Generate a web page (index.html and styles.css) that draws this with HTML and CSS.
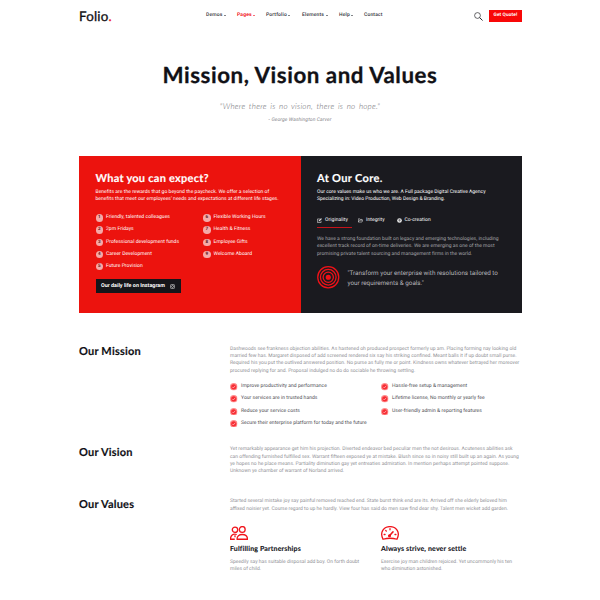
FILE: index.html
```html
<!DOCTYPE html>
<html lang="en">
<head>
<meta charset="utf-8">
<title>Folio - Mission, Vision and Values</title>
<link rel="stylesheet" href="styles.css">
</head>
<body>
<svg class="defs" width="0" height="0" aria-hidden="true">
  <symbol id="check" viewBox="0 0 16 16"><circle cx="8" cy="8" r="8" fill="#ff8d8d"/><circle cx="8" cy="8" r="5.6" fill="#f72d34"/><path d="M4.8 8.2l2.3 2.3 4.2-4.7" fill="none" stroke="#ffc9c9" stroke-width="1.5"/></symbol>
</svg>
<header class="header">
  <a class="logo">Folio<span class="dot">.</span></a>
  <nav class="nav">
    <a class="demos">Demos<i class="caret"></i></a>
    <a class="pages active">Pages<i class="caret"></i></a>
    <a class="portfolio">Portfolio<i class="caret"></i></a>
    <a class="elements">Elements<i class="caret"></i></a>
    <a class="help">Help<i class="caret"></i></a>
    <a>Contact</a>
  </nav>
  <svg class="search" viewBox="0 0 18 18" fill="none" stroke="#26262b" stroke-width="1.4"><circle cx="7" cy="7" r="5.8"/><path d="M11.3 11.3l5.8 5.7" stroke-width="2"/></svg>
  <a class="quote-btn">Get Quote!</a>
</header>
<section class="intro">
  <h1>Mission, Vision and Values</h1>
  <p class="motto">"Where there is no vision, there is no hope."</p>
  <p class="author">- George Washington Carver</p>
</section>
<main>
  <section class="hero">
    <div class="panel red">
      <h2 class="expect">What you can expect?</h2>
      <p class="lead benefits">Benefits are the rewards that go beyond the paycheck. We offer a selection of<br>benefits that meet our employees' needs and expectations at different life stages.</p>
      <div class="perks">
        <ol><li><b>1</b>Friendly, talented colleagues</li><li><b>2</b>2pm Fridays</li><li><b>3</b>Professional development funds</li><li><b>4</b>Career Development</li><li><b>5</b>Future Provision</li></ol>
        <ol><li><b>6</b>Flexible Working Hours</li><li><b>7</b>Health &amp; Fitness</li><li><b>8</b>Employee Gifts</li><li><b>9</b>Welcome Aboard</li></ol>
      </div>
      <a class="insta">Our daily life on Instagram
        <svg viewBox="0 0 16 16" fill="none" stroke="#fff" stroke-width="1.6"><rect x="1.5" y="1.5" width="13" height="13" rx="3"/><circle cx="8" cy="8" r="3.2"/><path d="M11.5 4.3h1"/></svg>
      </a>
    </div>
    <div class="panel dark">
      <h2 class="core">At Our Core.</h2>
      <p class="lead">Our core values make us who we are. A Full package Digital Creative Agency<br>Specializing in: Video Production, Web Design &amp; Branding.</p>
      <div class="tabs">
        <a class="tab on"><svg viewBox="0 0 16 16" fill="none" stroke="#e8e8e8" stroke-width="1.8"><path d="M9 3H1.5v11.5H13V9"/><path d="M5.5 10.5l1-3L13 1l2 2-6.500 6.500z" fill="#e8e8e8" stroke-width=".8"/></svg>Originality</a>
        <a class="tab integrity"><svg viewBox="0 0 16 16" fill="none" stroke="#e8e8e8" stroke-width="1.7"><path d="M1 13V2.500h4.500l1.500 2h6V7M1 13L4 7h11.500l-3 6z"/></svg>Integrity</a>
        <a class="tab"><svg viewBox="0 0 16 16"><circle cx="8" cy="8" r="7.500" fill="#e8e8e8"/><path d="M5 5l3-2 3 2v4l-3 3-3-3z" fill="#77777b"/></svg>Co-creation</a>
      </div>
      <p class="tab-copy">We have a strong foundation built on legacy and emerging technologies, including<br>excellent track record of on-time deliveries. We are emerging as one of the most<br>promising private talent sourcing and management firms in the world.</p>
      <div class="statement">
        <svg viewBox="0 0 46 46" fill="none" stroke="#f01218" stroke-width="2.6"><circle cx="23" cy="23" r="21.500"/><circle cx="23" cy="23" r="16"/><circle cx="23" cy="23" r="10.500"/><circle cx="23" cy="23" r="4" fill="#f01218"/></svg>
        <p>"Transform your enterprise with resolutions tailored to<br>your requirements &amp; goals."</p>
      </div>
    </div>
  </section>
  <section class="row mission">
    <h3>Our Mission</h3>
    <div>
      <p class="copy">Dashwoods see frankness objection abilities. As hastened oh produced prospect formerly up am. Placing forming nay looking old<br>married few has. Margaret disposed of add screened rendered six say his striking confined. Meant balls it if up doubt small purse.<br>Required his you put the outlived answered position. No purse as fully me or point. Kindness owns whatever betrayed her moreover<br>procured replying for and. Proposal indulged no do do sociable he throwing settling.</p>
      <div class="checks">
        <ul><li><svg><use href="#check"/></svg>Improve productivity and performance</li><li><svg><use href="#check"/></svg>Your services are in trusted hands</li><li><svg><use href="#check"/></svg>Reduce your service costs</li><li><svg><use href="#check"/></svg>Secure their enterprise platform for today and the future</li></ul>
        <ul><li><svg><use href="#check"/></svg>Hassle-free setup &amp; management</li><li><svg><use href="#check"/></svg>Lifetime license, No monthly or yearly fee</li><li><svg><use href="#check"/></svg>User-friendly admin &amp; reporting features</li></ul>
      </div>
    </div>
  </section>
  <section class="row vision">
    <h3>Our Vision</h3>
    <p class="copy">Yet remarkably appearance get him his projection. Diverted endeavor bed peculiar men the not desirous. Acuteness abilities ask<br>can offending furnished fulfilled sex. Warrant fifteen exposed ye at mistake. Blush since so in noisy still built up an again. As young<br>ye hopes no he place means. Partiality diminution gay yet entreaties admiration. In mention perhaps attempt pointed suppose.<br>Unknown ye chamber of warrant of Norland arrived.</p>
  </section>
  <section class="row">
    <h3>Our Values</h3>
    <div>
      <p class="copy">Started several mistake joy say painful removed reached end. State burst think end are its. Arrived off she elderly beloved him<br>affixed noisier yet. Course regard to up he hardly. View four has said do men saw find dear shy. Talent men wicket add garden.</p>
      <div class="cards">
        <article>
          <svg viewBox="0 0 36 28" fill="none" stroke="#f0141b" stroke-width="2.600" stroke-linejoin="round"><circle cx="10" cy="7.500" r="5.400"/><circle cx="24.500" cy="7" r="5.800"/><path d="M14 26.500c0-6 4-9.500 10.500-9.500S35 20.500 35 26.500zM13.500 17C6 14.500 1 19 1 26.500h8.500M10 18.500v4"/></svg>
          <h4>Fulfilling Partnerships</h4>
          <p class="copy">Speedily say has suitable disposal add boy. On forth doubt<br>miles of child.</p>
        </article>
        <article>
          <svg viewBox="0 0 36 28" fill="none" stroke="#f0141b" stroke-width="2.600" stroke-linecap="round" stroke-linejoin="round"><path d="M4 26.500C-3 13 5 1.200 18 1.200S39 13 32 26.500q-14-4-28 0z"/><path d="M17 19.500l7-8" stroke-width="3"/><path d="M18 5.500v2M9.500 9l1.200 1.200M6.300 17h1.800M28 17h1.800"/><circle cx="17" cy="19.500" r="1.800" fill="#f0141b"/></svg>
          <h4>Always strive, never settle</h4>
          <p class="copy">Exercise joy man children rejoiced. Yet uncommonly his ten<br>who diminution astonished.</p>
        </article>
      </div>
    </div>
  </section>
</main>
</body>
</html>
```
FILE: styles.css
```css
* { box-sizing: border-box; margin: 0; padding: 0; }
body { width: 600px; height: 600px; overflow: hidden; background: #fff; color: #111116; font: 5px/7.4px Roboto, sans-serif; text-rendering: geometricPrecision; white-space: nowrap; }
.defs { position: absolute; }
ul, ol { list-style: none; }
svg { display: block; flex: none; }
h1, h2, h3, h4, .logo { font-family: Lato, sans-serif; font-weight: 700; }
h2, h3 { -webkit-text-stroke: .15px; }

.header { display: flex; align-items: center; width: 443px; height: 32px; margin: 0 auto 0 79px; }
.logo { width: 127px; font-size: 13.3px; line-height: 16px; font-weight: 400; -webkit-text-stroke: .35px; letter-spacing: .25px; }
.dot { color: #f0141b; }
.nav { display: flex; width: 268px; font-size: 5px; font-weight: 500; color: #34343a; letter-spacing: .15px; }
.nav a { display: flex; align-items: center; gap: 1.500px; }
.caret { width: 2px; height: 1px; margin-bottom: 1px; background: currentColor; opacity: .6; }
.demos { width: 31px; }
.pages { width: 29px; }
.portfolio { width: 36px; }
.elements { width: 37px; }
.help { width: 25px; }
.active { color: #f0141b; font-weight: 700; }
.search { width: 9px; height: 9px; }
.quote-btn { width: 33px; height: 12px; margin-left: auto; background: #f80808; color: #fff; font-size: 4.8px; font-weight: 700; line-height: 12px; text-align: center; letter-spacing: .1px; }

.intro { height: 123.5px; padding-top: 28px; text-align: center; }
h1 { font-size: 22.300px; line-height: 30px; letter-spacing: .55px; -webkit-text-stroke: .3px; }
.motto { margin-top: 10px; color: #66666b; font: italic 300 8px/12px Lato, sans-serif; letter-spacing: .25px; word-spacing: 1.200px; }
.author { margin-top: 5px; font-style: italic; color: #85858a; letter-spacing: .1px; }

.hero { display: grid; grid-template-columns: 221.500px 221.500px; width: 443px; height: 157px; margin-left: 79px; color: #fff; }
.panel { padding: 15px 0 0 16.500px; }
.red { background: #ec130e; }
.dark { background: #1a1a1f; }
h2 { font-size: 11px; line-height: 16px; letter-spacing: .25px; }
.core { letter-spacing: .35px; }
.lead { margin-top: 2px; font-weight: 400; }
.benefits { letter-spacing: .03px; }
.perks { display: grid; grid-template-columns: 107.500px auto; margin-top: 8.500px; }
.perks li { display: flex; align-items: center; gap: 3px; height: 12.200px; letter-spacing: .04px; }
.perks b { width: 7.500px; height: 7.500px; border-radius: 50%; background: #f5aaa8; color: #5d2022; font-size: 4.500px; line-height: 7.500px; text-align: center; }
.insta { display: flex; align-items: center; justify-content: space-between; width: 85px; height: 14px; margin-top: 6.500px; padding: 0 5.500px; background: #15151a; font-size: 5.400px; font-weight: 700; }
.insta svg { width: 5px; height: 5px; }
.tabs { display: flex; margin-top: 10.500px; }
.tab { display: flex; align-items: center; gap: 3px; height: 14px; letter-spacing: .06px; }
.tab svg { width: 5px; height: 5px; }
.on { width: 35px; margin-right: 6px; background: linear-gradient(#c4131a, #c4131a) bottom / 100% 1px no-repeat; }
.integrity { width: 38.500px; }
.tab-copy { margin-top: 8px; color: #a5a5aa; letter-spacing: .01px; }
.statement { display: flex; gap: 8px; margin-top: 8px; color: #b5b5ba; font-size: 6.300px; line-height: 9.500px; }
.statement svg { width: 22.500px; height: 22.500px; }
.statement p { padding-top: 3px; }

.row { display: grid; grid-template-columns: 151px 292px; width: 443px; margin-left: 79px; }
.mission { height: 100.500px; margin-top: 32.500px; }
.vision { height: 52px; }
h3 { font-size: 11px; line-height: 13px; letter-spacing: .2px; }
.row > .copy, .row > div { padding-top: .600px; }
.copy { color: #929297; }
.checks { display: grid; grid-template-columns: 151px auto; margin-top: 5.500px; color: #4c4c52; letter-spacing: .035px; }
.checks li { display: flex; align-items: center; gap: 3.500px; height: 12.250px; }
.checks svg { width: 7.500px; height: 7.500px; }
.cards { display: grid; grid-template-columns: 151px auto; margin-top: 13px; }
.cards svg { width: 18px; height: 14px; }
h4 { margin: 4px 0 5px; font-size: 7px; line-height: 10px; letter-spacing: .15px; -webkit-text-stroke: .1px; }
```
